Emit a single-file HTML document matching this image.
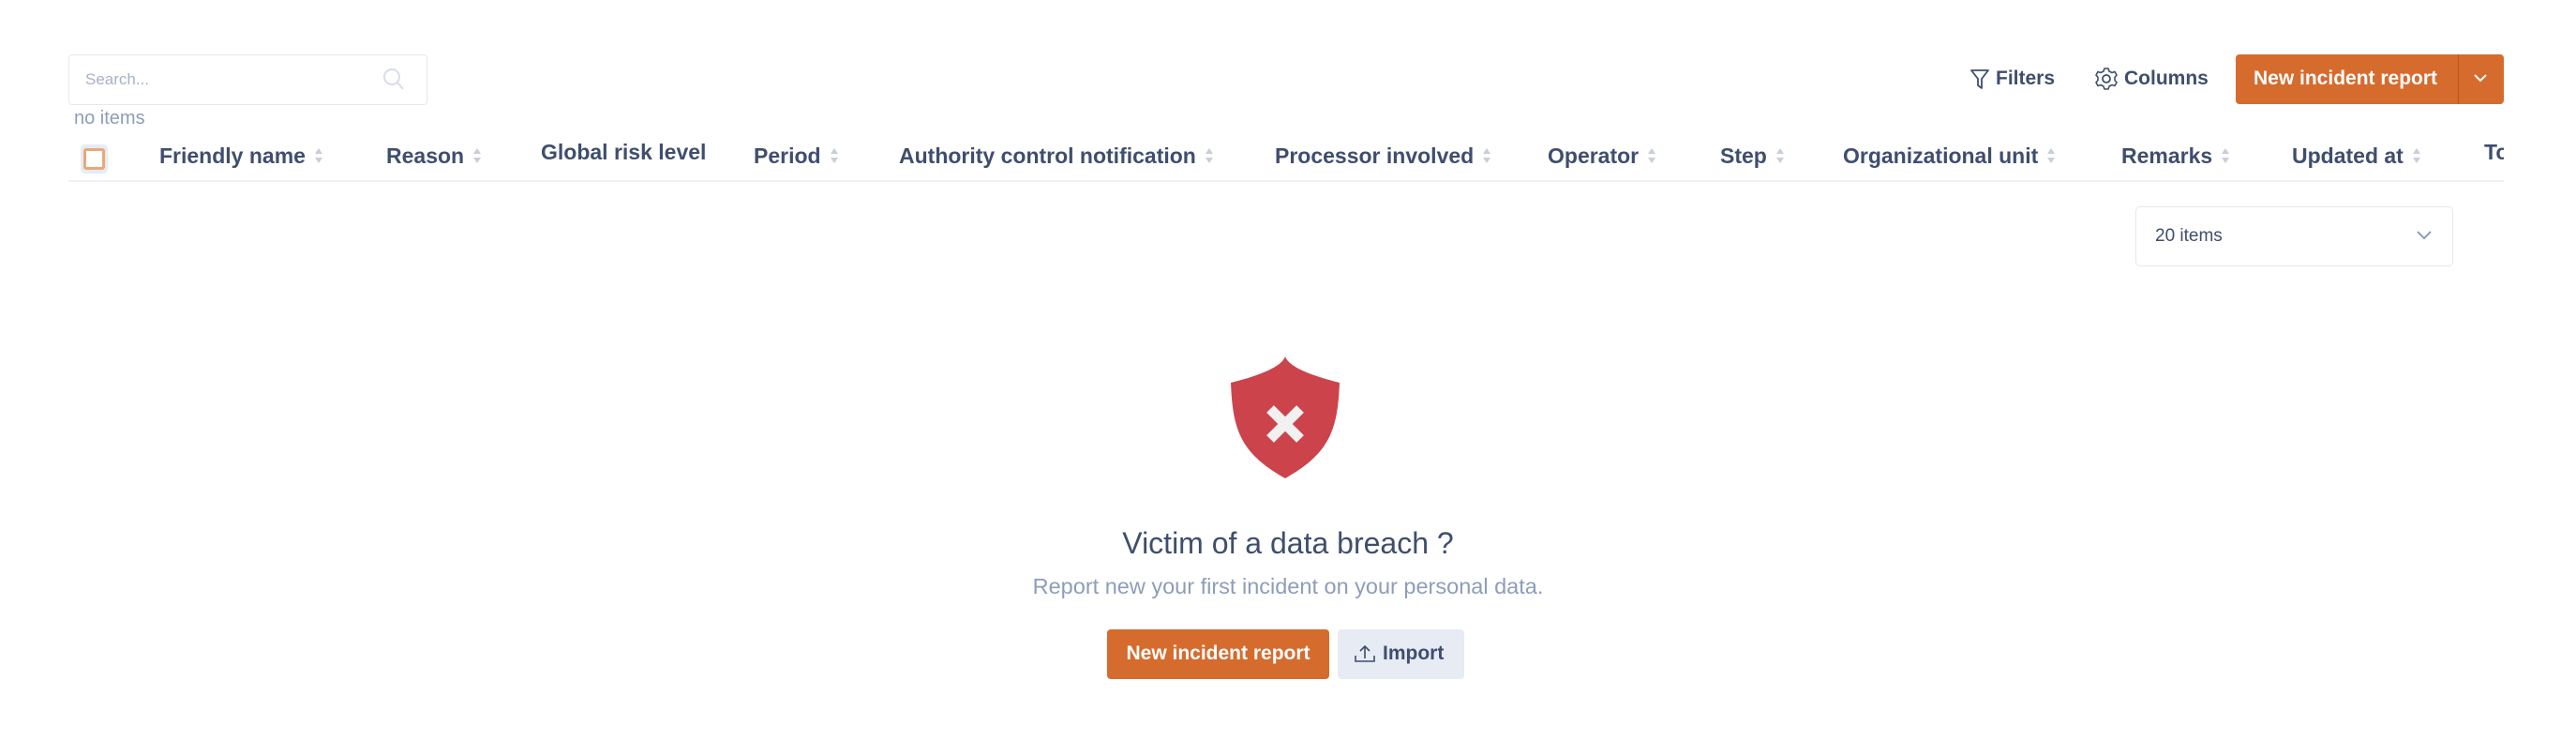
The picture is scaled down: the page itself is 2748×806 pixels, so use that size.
<!DOCTYPE html>
<html><head><meta charset="utf-8"><style>
*{margin:0;padding:0;box-sizing:border-box}
body{width:2748px;height:806px;background:#fff;font-family:"Liberation Sans",sans-serif;position:relative;overflow:hidden;color:#3f4e6e}
.a{position:absolute;white-space:nowrap}
.h{position:absolute;top:151px;font-weight:bold;font-size:23px;color:#3f4e6e;line-height:30px;white-space:nowrap}
.s{display:inline-block;vertical-align:middle;margin-left:9px;width:10px;height:18px;position:relative;top:-2px}
.s:before,.s:after{content:"";position:absolute;left:1px;border-left:4px solid transparent;border-right:4px solid transparent}
.s:before{top:1px;border-bottom:6px solid #c9ced8}
.s:after{bottom:1px;border-top:6px solid #c9ced8}
.btn{position:absolute;background:#d66b2e;color:#fff;font-weight:bold;border-radius:4px}
</style></head><body>
<div class="a" style="left:73px;top:58px;width:383px;height:54px;border:1.5px solid #e6e8f2;border-radius:4px"></div>
<div class="a" style="left:91px;top:75px;font-size:17px;color:#a7b1c6">Search...</div>
<svg class="a" style="left:408px;top:72px" width="24" height="26" viewBox="0 0 24 26"><circle cx="10" cy="10" r="8" fill="none" stroke="#d9dde7" stroke-width="2"/><path d="M16 16l6 7" stroke="#d9dde7" stroke-width="2"/></svg>
<div class="a" style="left:79px;top:115px;font-size:20px;color:#8d9dba">no items</div>
<div class="a" style="left:86px;top:154px;width:29px;height:31px;background:#e6ebf4;border-radius:5px"></div>
<div class="a" style="left:89px;top:158px;width:23px;height:23px;border:3px solid #e8a878;background:#fff;border-radius:3px"></div>
<div class="h" style="left:170px">Friendly name<span class="s"></span></div>
<div class="h" style="left:412px">Reason<span class="s"></span></div>
<div class="h" style="left:577px;top:147px">Global risk level</div>
<div class="h" style="left:804px">Period<span class="s"></span></div>
<div class="h" style="left:959px">Authority control notification<span class="s"></span></div>
<div class="h" style="left:1360px">Processor involved<span class="s"></span></div>
<div class="h" style="left:1651px">Operator<span class="s"></span></div>
<div class="h" style="left:1835px">Step<span class="s"></span></div>
<div class="h" style="left:1966px">Organizational unit<span class="s"></span></div>
<div class="h" style="left:2263px">Remarks<span class="s"></span></div>
<div class="h" style="left:2445px">Updated at<span class="s"></span></div>
<div style="position:absolute;left:2650px;top:147px;width:21px;overflow:hidden;font-weight:bold;font-size:23px;line-height:30px">To</div>
<div class="a" style="left:73px;top:192px;width:2598px;height:2px;background:#edf0f6"></div>

<svg class="a" style="left:2101px;top:72px" width="22" height="26" viewBox="0 0 22 26"><path d="M2 3h18l-7 9v10l-4-3v-7z" fill="none" stroke="#3f4e6e" stroke-width="1.8" stroke-linejoin="round"/></svg>
<div class="a" style="left:2129px;top:72px;font-size:21px;font-weight:bold">Filters</div>
<svg class="a" style="left:2234px;top:71px" width="26" height="26" viewBox="0 0 26 26"><circle cx="13" cy="13" r="4" fill="none" stroke="#3f4e6e" stroke-width="1.8"/><path d="M11 2h4l1 3 3 1.5 3-1 2 3.5-2 2.5v3l2 2.5-2 3.5-3-1-3 1.5-1 3h-4l-1-3-3-1.5-3 1-2-3.5 2-2.5v-3l-2-2.5 2-3.5 3 1 3-1.5z" fill="none" stroke="#3f4e6e" stroke-width="1.6" stroke-linejoin="round"/></svg>
<div class="a" style="left:2266px;top:72px;font-size:21px;font-weight:bold">Columns</div>
<div class="btn" style="left:2385px;top:58px;width:286px;height:53px"></div>
<div class="a" style="left:2622px;top:58px;width:1px;height:53px;background:#b8541f"></div>
<div class="a" style="left:2404px;top:72px;font-size:21px;font-weight:bold;color:#fff">New incident report</div>
<svg class="a" style="left:2638px;top:77px" width="16" height="12" viewBox="0 0 16 12"><path d="M2 3l6 6 6-6" fill="none" stroke="#fff" stroke-width="2"/></svg>

<div class="a" style="left:2278px;top:220px;width:339px;height:64px;border:1.5px solid #e6e8f2;border-radius:5px"></div>
<div class="a" style="left:2299px;top:241px;font-size:19px;color:#3f4e6e">20 items</div>
<svg class="a" style="left:2577px;top:244px" width="18" height="14" viewBox="0 0 18 14"><path d="M2 3l7 7 7-7" fill="none" stroke="#8d9dba" stroke-width="2"/></svg>

<svg class="a" style="left:1311px;top:378px" width="120" height="134" viewBox="0 0 120 134"><path d="M60 2c3 10 25 20 58 28-2 50-10 75-58 102C12 105 4 80 2 30 35 22 57 12 60 2z" fill="#cc434b"/><path d="M44 58l32 32M76 58L44 90" stroke="#f1f1f1" stroke-width="11"/></svg>
<div class="a" style="left:0;width:2748px;text-align:center;top:561px;font-size:32px;color:#3f4e6e">Victim of a data breach ?</div>
<div class="a" style="left:0;width:2748px;text-align:center;top:612px;font-size:23.5px;color:#8d9dba">Report new your first incident on your personal data.</div>
<div class="btn" style="left:1181px;top:671px;width:237px;height:53px"></div>
<div class="a" style="left:1181px;width:237px;text-align:center;top:685px;font-size:21px;font-weight:bold;color:#fff">New incident report</div>
<div class="a" style="left:1427px;top:671px;width:135px;height:53px;background:#e6ebf4;border-radius:4px"></div>
<svg class="a" style="left:1444px;top:686px" width="24" height="22" viewBox="0 0 24 22"><path d="M12 16V3M7 8l5-5 5 5M2 13v6h20v-6" fill="none" stroke="#3f4e6e" stroke-width="1.6"/></svg>
<div class="a" style="left:1475px;top:685px;font-size:21px;font-weight:bold;color:#3f4e6e">Import</div>
</body></html>
